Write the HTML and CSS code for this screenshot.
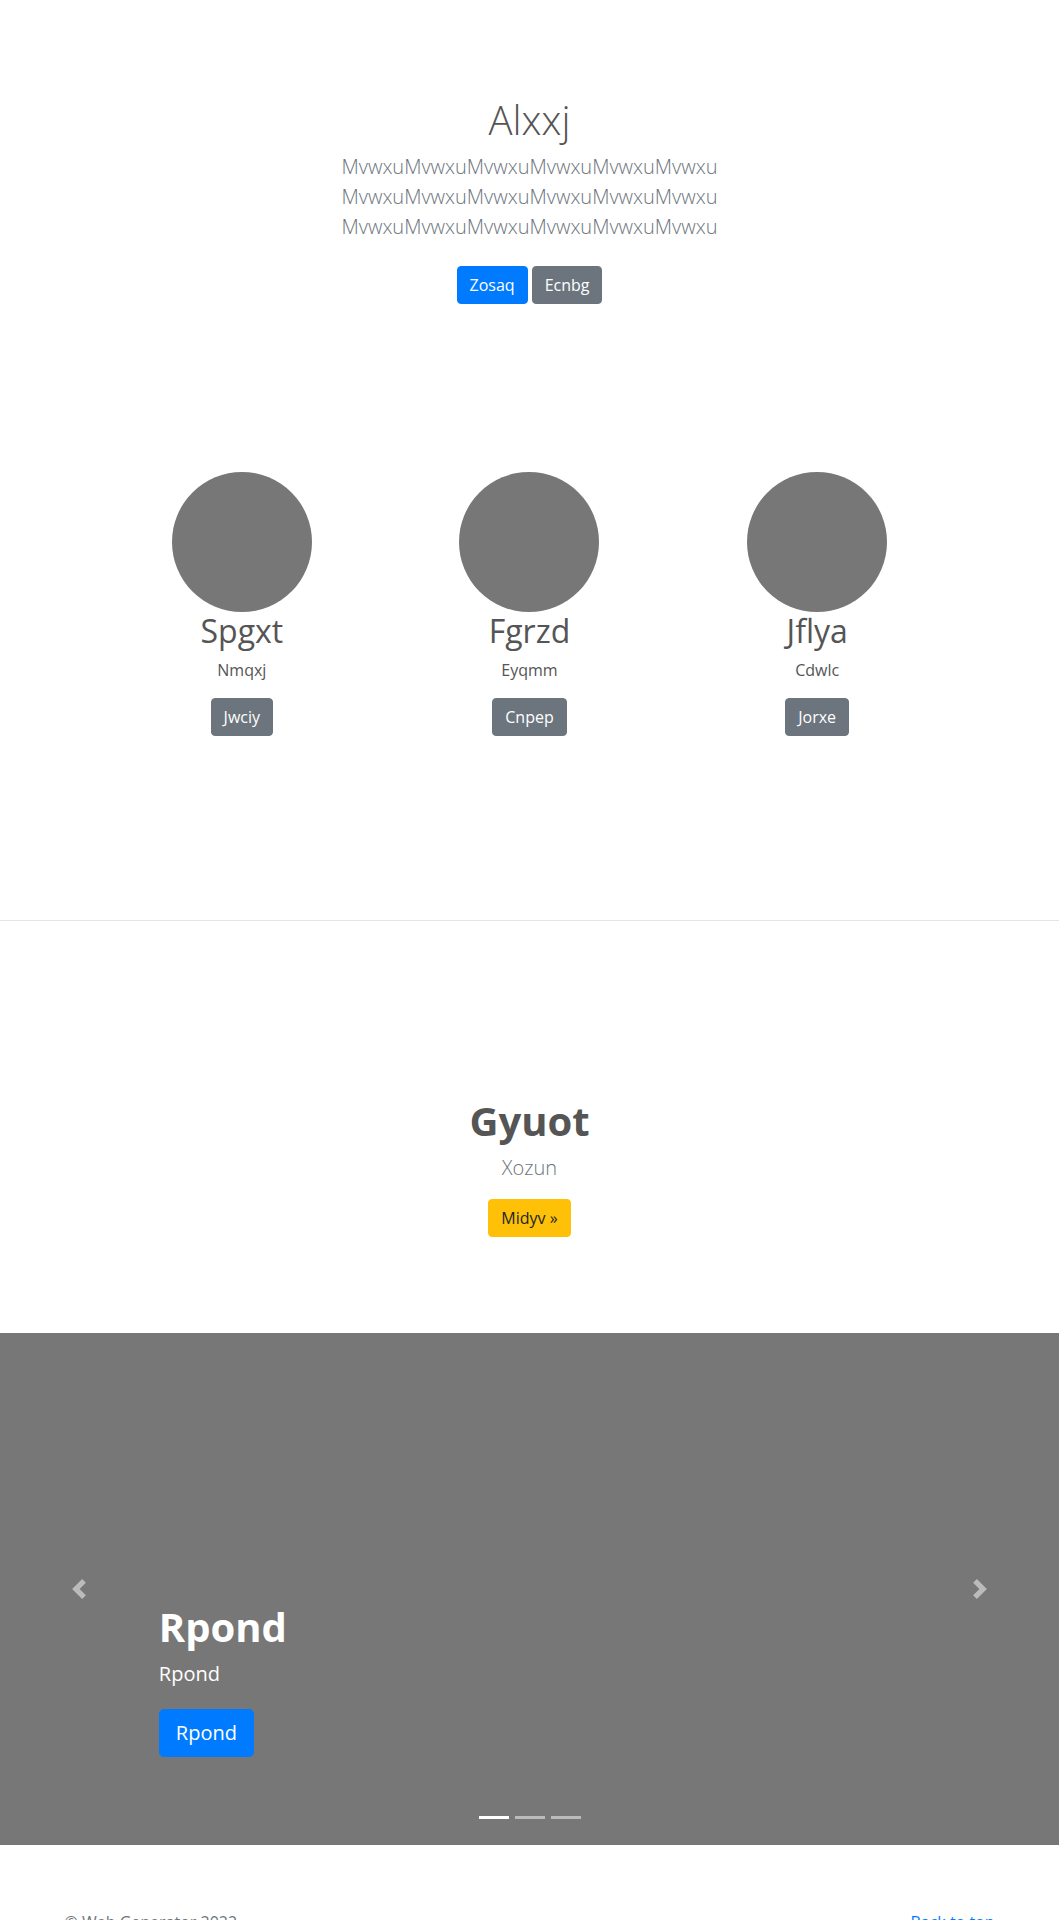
FILE: index.html
```html
<!DOCTYPE html>
<html lang="en">
<head>
<meta charset="utf-8">
<title>Web Generator</title>
<link rel="stylesheet" href="styles.css">
</head>
<body>
<main>
  <section class="hero">
    <h1 class="hero-title">Alxxj</h1>
    <p class="lead hero-lead">MvwxuMvwxuMvwxuMvwxuMvwxuMvwxu MvwxuMvwxuMvwxuMvwxuMvwxuMvwxu MvwxuMvwxuMvwxuMvwxuMvwxuMvwxu</p>
    <div class="actions hero-actions">
      <a class="btn btn-primary" href="#">Zosaq</a>
      <a class="btn btn-secondary" href="#">Ecnbg</a>
    </div>
  </section>

  <section class="marketing">
    <div class="marketing-row">
      <div class="member">
        <div class="avatar"></div>
        <h2 class="member-name">Spgxt</h2>
        <p class="member-role">Nmqxj</p>
        <a class="btn btn-secondary" href="#">Jwciy</a>
      </div>
      <div class="member">
        <div class="avatar"></div>
        <h2 class="member-name">Fgrzd</h2>
        <p class="member-role">Eyqmm</p>
        <a class="btn btn-secondary" href="#">Cnpep</a>
      </div>
      <div class="member">
        <div class="avatar"></div>
        <h2 class="member-name">Jflya</h2>
        <p class="member-role">Cdwlc</p>
        <a class="btn btn-secondary" href="#">Jorxe</a>
      </div>
    </div>
  </section>

  <section class="feature">
    <h1 class="feature-title">Gyuot</h1>
    <p class="lead feature-lead">Xozun</p>
    <div class="actions">
      <a class="btn btn-warning" href="#">Midyv &raquo;</a>
    </div>
  </section>

  <section class="carousel">
    <div class="carousel-item">
      <div class="carousel-caption">
        <h1 class="caption-title">Rpond</h1>
        <p class="caption-text">Rpond</p>
        <div class="caption-actions">
          <a class="btn btn-lg btn-primary" href="#">Rpond</a>
        </div>
      </div>
    </div>
    <a class="carousel-control carousel-control-prev" href="#" aria-label="Previous">
      <svg class="control-icon" viewBox="0 0 8 8" width="20" height="20"><path d="M5.25 0l-4 4 4 4 1.5-1.5L4.25 4l2.5-2.5L5.25 0z"/></svg>
    </a>
    <a class="carousel-control carousel-control-next" href="#" aria-label="Next">
      <svg class="control-icon" viewBox="0 0 8 8" width="20" height="20"><path d="M2.75 0l-1.5 1.5L3.75 4l-2.5 2.5L2.75 8l4-4-4-4z"/></svg>
    </a>
    <ol class="carousel-indicators">
      <li class="active"></li>
      <li></li>
      <li></li>
    </ol>
  </section>
</main>

<footer class="footer">
  <div class="footer-inner">
    <p class="footer-copy">&copy; Web Generator 2022</p>
    <p class="footer-top"><a href="#">Back to top</a></p>
  </div>
</footer>
</body>
</html>
```

FILE: styles.css
```css
* {
  box-sizing: border-box;
}

html, body {
  margin: 0;
  padding: 0;
}

body {
  font-family: "Open Sans", "Noto Sans", "Liberation Sans", sans-serif;
  font-size: 16px;
  line-height: 1.5;
  color: #555;
  background: #fff;
}

h1, h2, p {
  margin-top: 0;
}

a {
  color: #007bff;
  text-decoration: none;
}

/* Buttons */
.btn {
  display: inline-block;
  padding: 6px 12px;
  font-size: 16px;
  line-height: 1.5;
  font-weight: 400;
  border: 1px solid transparent;
  border-radius: 4px;
  text-align: center;
  white-space: nowrap;
}

.btn-primary {
  color: #fff;
  background: #007bff;
  border-color: #007bff;
}

.btn-secondary {
  color: #fff;
  background: #6c757d;
  border-color: #6c757d;
}

.btn-warning {
  color: #212529;
  background: #ffc107;
  border-color: #ffc107;
}

.btn-lg {
  padding: 8px 16px;
  font-size: 20px;
  line-height: 1.5;
  border-radius: 4.8px;
}

.lead {
  font-size: 20px;
  font-weight: 300;
  line-height: 1.5;
  color: #6c757d;
}

.actions {
  display: flex;
  justify-content: center;
  gap: 4px;
}

/* Hero */
.hero {
  padding: 96px 15px 112px;
  text-align: center;
}

.hero-title {
  margin: 0 0 8px;
  font-size: 40px;
  font-weight: 300;
  line-height: 1.2;
}

.hero-lead {
  max-width: 456px;
  margin: 0 auto 16px;
}

.hero-actions {
  padding: 8px 0;
}

/* Marketing */
.marketing {
  padding: 48px 0 183.6px;
  border-bottom: 1px solid #e5e5e5;
}

.marketing-row {
  max-width: 863px;
  margin: 0 auto;
  display: grid;
  grid-template-columns: repeat(3, 1fr);
}

.member {
  display: flex;
  flex-direction: column;
  align-items: center;
  text-align: center;
}

.avatar {
  width: 140px;
  height: 140px;
  border-radius: 50%;
  background: #777;
}

.member-name {
  margin: 0 0 8px;
  font-size: 32px;
  font-weight: 400;
  line-height: 1.2;
}

.member-role {
  margin: 0 0 16px;
}

/* Feature */
.feature {
  padding: 176px 15px 96px;
  text-align: center;
}

.feature-title {
  margin: 0 0 8px;
  font-size: 40px;
  font-weight: 700;
  line-height: 1.2;
}

.feature-lead {
  margin: 0 0 16px;
}

/* Carousel */
.carousel {
  position: relative;
  overflow: hidden;
}

.carousel-item {
  height: 512px;
  background: #777;
}

.carousel-caption {
  position: absolute;
  left: 15%;
  right: 15%;
  bottom: 52px;
  padding: 20px 0;
  color: #fff;
  text-align: left;
  z-index: 10;
}

.caption-title {
  margin: 0 0 8px;
  font-size: 40px;
  font-weight: 700;
  line-height: 1.2;
}

.caption-text {
  margin: 0 0 20px;
  font-size: 20px;
  line-height: 1.5;
}

.caption-actions {
  display: flex;
  margin-bottom: 16px;
}

.carousel-control {
  position: absolute;
  top: 0;
  bottom: 0;
  width: 15%;
  display: flex;
  align-items: center;
  justify-content: center;
  opacity: 0.5;
  z-index: 1;
}

.carousel-control-prev {
  left: 0;
}

.carousel-control-next {
  right: 0;
}

.control-icon {
  display: block;
  width: 20px;
  height: 20px;
  fill: #fff;
}

.carousel-indicators {
  position: absolute;
  left: 0;
  right: 0;
  bottom: 0;
  z-index: 15;
  display: flex;
  justify-content: center;
  margin: 0 15% 16px;
  padding: 0;
  list-style: none;
}

.carousel-indicators li {
  box-sizing: content-box;
  width: 30px;
  height: 3px;
  margin: 0 3px;
  background-color: #fff;
  background-clip: padding-box;
  border-top: 10px solid transparent;
  border-bottom: 10px solid transparent;
  opacity: 0.5;
}

.carousel-indicators li.active {
  opacity: 1;
}

/* Footer */
.footer {
  padding: 65px 0 48px;
  color: #6c757d;
}

.footer-inner {
  max-width: 960px;
  margin: 0 auto;
  padding: 0 15px;
  display: flex;
  justify-content: space-between;
}

.footer-copy,
.footer-top {
  margin: 0 0 4px;
}
```
